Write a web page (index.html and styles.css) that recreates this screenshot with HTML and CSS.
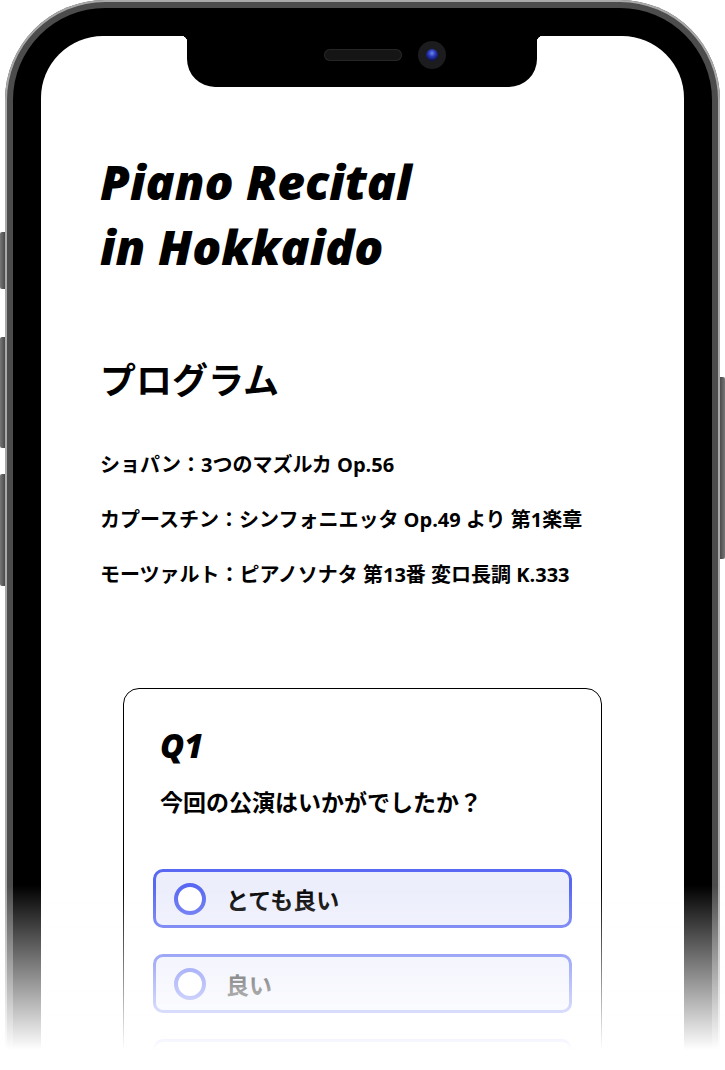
FILE: index.html
```html
<!DOCTYPE html>
<html lang="ja">
<head>
    <meta charset="UTF-8">
    <meta name="viewport" content="width=device-width, initial-scale=1.0">
    <title>Piano Recital in Hokkaido</title>
    <link rel="stylesheet" href="styles.css">
</head>
<body>
    <div class="phone">
        <span class="btn btn-action"></span>
        <span class="btn btn-vol-up"></span>
        <span class="btn btn-vol-down"></span>
        <span class="btn btn-power"></span>
        <div class="bezel">
            <div class="screen">
                <div class="notch">
                    <span class="speaker"></span>
                    <span class="camera"></span>
                </div>
                <main class="content">
                    <h1 class="title">Piano Recital<br>in Hokkaido</h1>

                    <h2 class="section-title">プログラム</h2>
                    <ul class="program">
                        <li>ショパン：3つのマズルカ Op.56</li>
                        <li>カプースチン：シンフォニエッタ Op.49 より 第1楽章</li>
                        <li>モーツァルト：ピアノソナタ 第13番 変ロ長調 K.333</li>
                    </ul>

                    <section class="question">
                        <h3 class="q-num">Q1</h3>
                        <p class="q-text">今回の公演はいかがでしたか？</p>
                        <label class="option">
                            <input type="radio" name="q1">
                            <span class="radio"></span>
                            <span class="option-label">とても良い</span>
                        </label>
                        <label class="option">
                            <input type="radio" name="q1">
                            <span class="radio"></span>
                            <span class="option-label">良い</span>
                        </label>
                        <label class="option">
                            <input type="radio" name="q1">
                            <span class="radio"></span>
                        </label>
                    </section>
                </main>
            </div>
        </div>
    </div>
    <div class="fade"></div>
</body>
</html>
```

FILE: styles.css
```css
html, body {
    height: 100%;
    overflow: hidden;
}
body {
    margin: 0;
    background: #fff;
    font-family: "Open Sans", "Noto Sans CJK JP", sans-serif;
    color: #000;
}

/* device frame */
.phone {
    position: relative;
    width: 715px;
    height: 1140px;
    margin-left: 5px;
    padding: 8px;
    box-sizing: border-box;
    border-radius: 100px;
    background: #4c4c4c;
    box-shadow: inset 0 0 0 2px #a9a9a9;
}
.btn {
    position: absolute;
    width: 5px;
    background: linear-gradient(90deg, #777, #4a4a4a);
}
.btn-action { left: -5px; top: 232px; height: 57px; border-radius: 2px 0 0 2px; }
.btn-vol-up { left: -5px; top: 337px; height: 111px; border-radius: 2px 0 0 2px; }
.btn-vol-down { left: -5px; top: 474px; height: 112px; border-radius: 2px 0 0 2px; }
.btn-power {
    right: -5px;
    top: 377px;
    height: 182px;
    border-radius: 0 2px 2px 0;
    background: linear-gradient(90deg, #4a4a4a, #777);
}
.bezel {
    height: 100%;
    padding: 28px;
    box-sizing: border-box;
    border-radius: 92px;
    background: #000;
}
.screen {
    position: relative;
    height: 100%;
    overflow: hidden;
    border-radius: 62px;
    background: #fff;
}
.notch {
    position: absolute;
    left: 146px;
    top: 0;
    width: 350px;
    height: 51px;
    background: #000;
    border-radius: 0 0 28px 28px;
}
.notch::before,
.notch::after {
    content: "";
    position: absolute;
    top: 0;
    width: 6px;
    height: 6px;
}
.notch::before {
    left: -6px;
    background: radial-gradient(circle at 0 100%, transparent 6px, #000 6.5px);
}
.notch::after {
    right: -6px;
    background: radial-gradient(circle at 100% 100%, transparent 6px, #000 6.5px);
}
.speaker {
    position: absolute;
    left: 137px;
    top: 13px;
    width: 78px;
    height: 12px;
    border-radius: 6px;
    background: #151515;
    box-shadow: inset 0 0 0 1px #262626;
}
.camera {
    position: absolute;
    left: 231px;
    top: 5px;
    width: 28px;
    height: 28px;
    border-radius: 50%;
    background: #1c1c1e;
}
.camera::after {
    content: "";
    position: absolute;
    left: 8px;
    top: 8px;
    width: 12px;
    height: 12px;
    border-radius: 50%;
    background: radial-gradient(circle at 50% 35%, #6f86f0 0, #2a3ab8 35%, #0b1250 75%, #1a4a6a 100%);
}

/* page */
.content {
    padding: 113px 59px 0;
}
.title {
    margin: 0;
    font-size: 48px;
    line-height: 65px;
    font-style: italic;
    font-weight: 800;
}
.section-title {
    margin: 78px 0 0;
    font-size: 36px;
    line-height: 48px;
    font-weight: 700;
}
.program {
    list-style: none;
    margin: 46px 0 0;
    padding: 0;
}
.program li {
    font-size: 20px;
    line-height: 28px;
    font-weight: 700;
    margin-bottom: 27px;
}
.program li:last-child {
    margin-bottom: 0;
}

.question {
    width: 479px;
    margin: 99px auto 0;
    padding: 37px 36px 40px;
    box-sizing: border-box;
    border: 1px solid #000;
    border-radius: 16px;
}
.q-num {
    margin: 0;
    font-size: 33px;
    line-height: 40px;
    font-style: italic;
    font-weight: 800;
}
.q-text {
    margin: 21px 0 0;
    font-size: 23px;
    line-height: 30px;
    font-weight: 700;
}
.option {
    display: flex;
    align-items: center;
    gap: 20px;
    height: 59px;
    margin: 26px -7px 0;
    padding-left: 18px;
    box-sizing: border-box;
    border: 3px solid #5868f2;
    border-radius: 10px;
    background: #eceefc;
    cursor: pointer;
}
.q-text + .option {
    margin-top: 52px;
}
.option input {
    display: none;
}
.radio {
    width: 32px;
    height: 32px;
    box-sizing: border-box;
    border: 4px solid #5868f2;
    border-radius: 50%;
    background: #fff;
}
.option-label {
    font-size: 23px;
    font-weight: 700;
}

.fade {
    position: fixed;
    left: 0;
    right: 0;
    bottom: 0;
    height: 185px;
    background: linear-gradient(rgba(255, 255, 255, 0), #fff 165px);
}
```
